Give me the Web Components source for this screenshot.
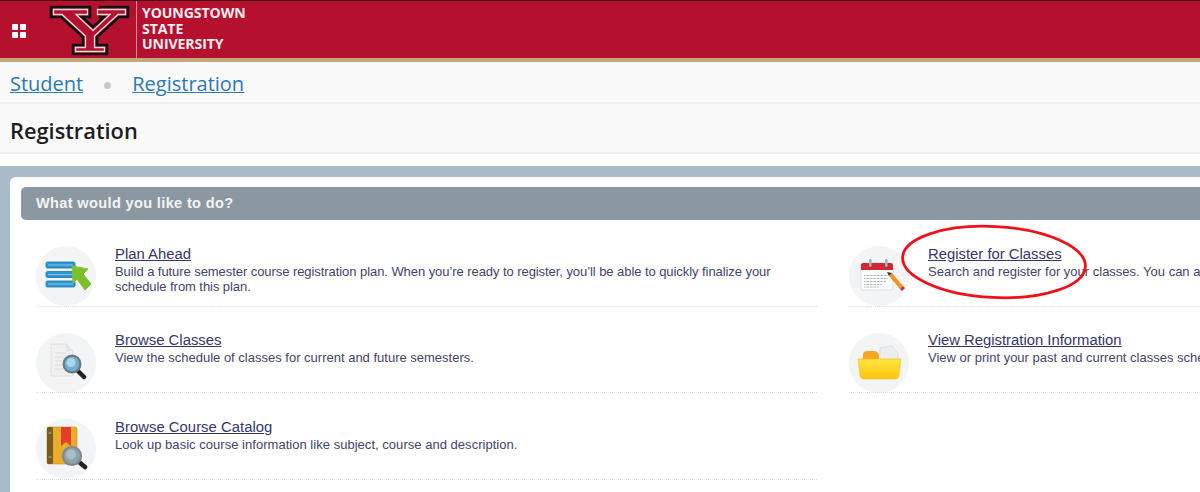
<!DOCTYPE html>
<html lang="en"><head><meta charset="utf-8"><title>Registration</title>
<style>
html,body{margin:0;padding:0;background:#fff;}
body{width:1200px;height:492px;overflow:hidden;font-family:"Liberation Sans",Arial,sans-serif;position:relative;}
yt-action svg{display:block;width:60px;height:60px;filter:blur(.35px);overflow:visible;}
</style></head><body>
<template id="t-header"><style>
:host{display:flex;align-items:stretch;height:62px;box-sizing:border-box;background:#b5112f;border-top:1px solid #3a1015;border-bottom:4px solid #bfa97c;}
.grid{display:grid;grid-template-columns:6px 6px;grid-auto-rows:6px;gap:2px;align-self:center;margin:3px 0 0 12px;}
.grid i{background:#fff;border-radius:1px;}
svg{display:block;margin-left:22px;width:84px;height:57px;flex:none;filter:blur(.3px);}
.rule{width:1px;background:#e08a96;margin-left:4px;}
.name{margin-left:5px;padding-top:4px;font:700 14.1px/15.6px "Open Sans",sans-serif;color:#f4ecee;letter-spacing:-.1px;}
</style>
<div class="grid"><i></i><i></i><i></i><i></i></div>
<svg viewBox="48 0 84 57" aria-label="Y logo"><polygon points="51,6 90,6 90,16 82,16 93,26 104,16 100,16 100,6 128,6 128,16 119,16 97,36 97,44 107,44 107,53 73,53 73,44 83,44 83,36 61,16 51,16" fill="#b5112f" stroke="#111" stroke-width="2.6" stroke-linejoin="miter"/><polygon points="53.5,8.5 87.5,8.5 87.5,13.5 76,13.5 93,29.5 110,13.5 97.5,13.5 97.5,8.5 125.5,8.5 125.5,13.5 118,13.5 94.5,35 94.5,46.5 104.5,46.5 104.5,50.5 75.5,50.5 75.5,46.5 85.5,46.5 85.5,35 62,13.5 53.5,13.5" fill="#b5112f" stroke="#e8dcdc" stroke-width="1.3"/></svg>
<div class="rule"></div>
<div class="name">YOUNGSTOWN<br>STATE<br>UNIVERSITY</div></template>

<template id="t-crumbs"><style>
:host{display:flex;align-items:center;height:42px;box-sizing:border-box;padding:3px 0 0 10px;background:#f9f9f9;font:20px "Open Sans",sans-serif;border-bottom:2px solid #efefef;}
::slotted(a){color:#2a78b5;text-decoration:underline;text-decoration-thickness:1px;}
i{width:7px;height:7px;border-radius:50%;background:#c4c8cb;margin:3px 21px 0 21px;}
</style><slot name="a"></slot><i></i><slot name="b"></slot></template>

<template id="t-title"><style>
:host{display:block;height:50px;box-sizing:border-box;padding:0 0 0 10px;background:#f9f9f9;border-bottom:2px solid #efefef;font:600 21.8px/54px "Open Sans",sans-serif;color:#1d1d1d;}
</style><slot></slot></template>

<template id="t-panel"><style>
:host{display:block;margin-top:12px;height:326px;box-sizing:border-box;padding:11px 0 0 10px;background:#a9bac8;}
.card{background:#fff;border-radius:6px 0 0 0;height:100%;padding:10px 0 0 11px;box-sizing:border-box;}
h2{margin:0;height:33px;box-sizing:border-box;padding-left:15px;background:#8b98a2;border-radius:5px 0 0 5px;color:#f2f4f5;font:700 14.6px/33px "Liberation Sans",sans-serif;letter-spacing:.33px;}
.cols{display:grid;grid-template-columns:796px 1fr;column-gap:17px;grid-auto-rows:86.5px;overflow:hidden;}
</style><div class="card"><h2><slot name="heading"></slot></h2><div class="cols"><slot></slot></div></div></template>

<template id="t-action"><style>
:host{display:flex;box-sizing:border-box;height:86.5px;padding:26px 0 0 15px;min-width:0;overflow:hidden;position:relative;}
:host::after{content:"";position:absolute;left:15px;right:0;top:85.5px;border-top:1px dotted #dcdcdc;}
.ic{width:60px;height:60px;flex:none;border-radius:50%;background:#f2f4f6;margin-right:19px;}
.tx{min-width:0;white-space:normal;font:13px/15px "Liberation Sans",sans-serif;color:#43436b;margin-top:-.5px;}
a{display:block;font:14.85px/17px "Liberation Sans",sans-serif;color:#35356a;text-decoration:underline;width:max-content;margin-bottom:1px;}
:host([nowrap]) .tx{white-space:nowrap;}
.d{display:block;max-width:680px;}
</style><div class="ic"><slot name="icon"></slot></div><div class="tx"><a href="#"><slot name="title"></slot></a><span class="d"><slot></slot></span></div></template>

<template id="t-mark"><style>:host{display:block;position:absolute;left:900px;top:224px;width:190px;height:76px;pointer-events:none;}
svg{display:block;width:190px;height:76px;overflow:visible}</style>
<svg viewBox="0 0 190 76"><ellipse cx="94" cy="38" rx="91.5" ry="35.5" transform="rotate(3 94 38)" fill="none" stroke="#f0101a" stroke-width="2.8"/></svg></template>

<yt-header></yt-header>
<yt-crumbs><a slot="a" href="#">Student</a><a slot="b" href="#">Registration</a></yt-crumbs>
<yt-title>Registration</yt-title>
<yt-panel>
<span slot="heading">What would you like to do?</span>
<yt-action style="letter-spacing:-.065px">
<svg slot="icon" viewBox="0 0 60 60"><g fill="#2f95cf" stroke="#1c78ae" stroke-width=".8"><rect x="10" y="16" width="29" height="6" rx="1.5"/><rect x="10" y="25.5" width="29" height="6" rx="1.5"/><rect x="10" y="35" width="29" height="6" rx="1.5"/></g><g stroke="#9ad4f0" stroke-width=".8"><path d="M12 19H37M12 28.5H37M12 38H37"/></g><path d="M36 20 L52 23 L47 28 L55 38 L49 44 L41 33 L37 37Z" fill="#7ebf2e" stroke="#7ebf2e" stroke-width="1" stroke-linejoin="round"/></svg>
<span slot="title" style="letter-spacing:0">Plan Ahead</span>Build a future semester course registration plan. When you’re ready to register, you’ll be able to quickly finalize your schedule from this plan.</yt-action>
<yt-action nowrap>
<svg slot="icon" viewBox="0 0 60 60"><rect x="12" y="17" width="32" height="27" rx="2" fill="#fdfdfd" stroke="#dddddd"/><path d="M12 24V19C12 18 13 17 14 17H42C43 17 44 18 44 19V24Z" fill="#cc2a2f"/><rect x="20" y="13" width="2.6" height="8" rx="1.2" fill="#9fb0bd"/><rect x="36" y="13" width="2.6" height="8" rx="1.2" fill="#9fb0bd"/><g stroke="#a9b9b5" stroke-width="1.2" fill="none"><path d="M15 29.5H39M15 32.5H39M15 35.5H37M15 38.5H33M15 41H30"/><path d="M17 28.5V42M20.5 28.5V42M24 28.5V42M27.5 28.5V42M31 28.5V42M34.5 28V37M38 28V34" stroke-width=".8" stroke="#fff"/></g><path d="M40 30 L43 27 L54 40 L51 43Z" fill="#f1942c"/><path d="M40 30 L43 27 L38 26Z" fill="#333"/><path d="M54 40 L51 43 L53 45 L56 42Z" fill="#c8353a"/></svg>
<span slot="title">Register for Classes</span>Search and register for your classes. You can also view and manage your schedule.</yt-action>
<yt-action nowrap>
<svg slot="icon" viewBox="0 0 60 60"><path d="M15 11H30L37 18V43H15Z" fill="#f0f0ee" stroke="#e0e0de"/><path d="M30 11V18H37Z" fill="#e0e4e6"/><path d="M19 20H30M19 24H28M19 28H26M19 32H26M19 36H27" stroke="#dadad8" stroke-width="1"/><path d="M42 38L48 44" stroke="#222" stroke-width="4.5" stroke-linecap="round"/><circle cx="36" cy="31" r="8.4" fill="#6fb1cf" stroke="#6c7a82" stroke-width="2.2"/><circle cx="35" cy="29.5" r="4.5" fill="#a9d6ea"/></svg>
<span slot="title">Browse Classes</span>View the schedule of classes for current and future semesters.</yt-action>
<yt-action nowrap>
<svg slot="icon" viewBox="0 0 60 60"><defs><linearGradient id="f" x1="0" y1="0" x2="0" y2="1"><stop offset="0" stop-color="#ffe640"/><stop offset="1" stop-color="#fdc412"/></linearGradient></defs><path d="M31 15 L43 13 L49 20 L49 30 L31 30Z" fill="#eceeef" stroke="#d9dcde"/><path d="M14 27V21C14 19 16 18 19 18H24C28 18 30 20 30 23V27Z" fill="#f6a623"/><path d="M9 26H52L50 42C50 45 48 46 45 46H16C13 46 11 45 11 42Z" fill="url(#f)" stroke="#f5b818" stroke-width=".6"/></svg>
<span slot="title">View Registration Information</span>View or print your past and current classes schedule and registration details.</yt-action>
<yt-action nowrap style="letter-spacing:.03px">
<svg slot="icon" viewBox="0 0 60 60"><rect x="11" y="8" width="30" height="37" rx="2" fill="#e9ad2e" stroke="#c98e1e" stroke-width=".6"/><rect x="11" y="8" width="6" height="37" rx="1.5" fill="#7a5a1e"/><path d="M12.5 14H15.5M12.5 38H15.5" stroke="#d9b060" stroke-width="1"/><path d="M25 8H35V27L30 23L25 27Z" fill="#e53d2c"/><path d="M43 43L49 48" stroke="#222" stroke-width="4.5" stroke-linecap="round"/><circle cx="36" cy="37" r="9" fill="#8da2aa" stroke="#7c8a90" stroke-width="2.2"/><circle cx="35" cy="35.5" r="5" fill="#a9bdc3"/></svg>
<span slot="title">Browse Course Catalog</span>Look up basic course information like subject, course and description.</yt-action>
</yt-panel>
<yt-mark></yt-mark>
<script>
for (const [tag,tpl] of [['yt-header','t-header'],['yt-crumbs','t-crumbs'],['yt-title','t-title'],['yt-panel','t-panel'],['yt-action','t-action'],['yt-mark','t-mark']]) {
  customElements.define(tag, class extends HTMLElement {
    constructor(){super();this.attachShadow({mode:'open'}).appendChild(document.getElementById(tpl).content.cloneNode(true));}
  });
}
</script>
</body></html>
